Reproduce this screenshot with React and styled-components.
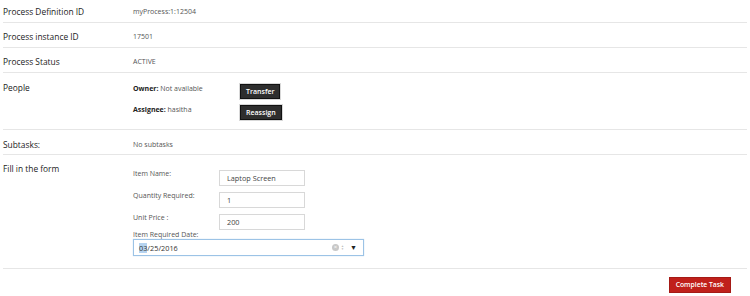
import React from "react";
import styled, { createGlobalStyle } from "styled-components";

const FONT = `"Open Sans", "Liberation Sans", sans-serif`;

const Global = createGlobalStyle`
  html, body { margin: 0; padding: 0; background: #fff; }
  body { font-family: ${FONT}; color: #333; }
  * { box-sizing: border-box; }
`;

const Page = styled.div`
  width: 750px;
  padding: 0 3px;
`;

const Row = styled.div`
  display: grid;
  grid-template-columns: 130px 1fr;
  border-bottom: 1px solid #e6e6e6;
  padding: ${(p) => p.$pad || "7px 0 3px"};
`;

const Label = styled.div`
  font-size: 8.4px;
  line-height: 14px;
  color: #222;
`;

const Value = styled.div`
  font-size: 7px;
  line-height: 14px;
  color: #555;
`;

const PeopleGrid = styled.div`
  display: grid;
  grid-template-columns: 107px auto;
  row-gap: 4px;
  justify-content: start;
  padding-top: 1px;
`;

const PersonText = styled.div`
  font-size: 7px;
  line-height: 14px;
  color: #555;
  b { color: #222; font-weight: 700; }
`;

const DarkButton = styled.button`
  font-family: ${FONT};
  font-size: 7px;
  font-weight: 600;
  color: #fff;
  background: #2e2e2e;
  border: 1px solid #111;
  outline: 1px solid #d8d8d8;
  height: 15px;
  padding: 0 5px;
  margin-top: 2px;
  line-height: 13px;
  cursor: pointer;
  justify-self: start;
`;

const FormGrid = styled.div`
  display: grid;
  grid-template-columns: 86px 86px;
  row-gap: 4px;
  padding-top: 6px;
`;

const FieldLabel = styled.div`
  font-size: 7px;
  line-height: ${(p) => (p.$tight ? "11px" : "12px")};
  color: #555;
`;

const TextInput = styled.input`
  font-family: ${FONT};
  font-size: 7.3px;
  color: #444;
  width: 86px;
  height: 16px;
  border: 1px solid #d8d8d8;
  padding: 0 7px;
  margin: 2px 0 0 0;
  background: #fff;
  outline: none;
`;

const DateBlock = styled.div`
  grid-column: 1 / span 2;
  margin-top: -5px;
`;

const DateField = styled.div`
  width: 231px;
  height: 17px;
  margin-top: -1px;
  border: 1px solid #9cc3e6;
  box-shadow: 0 0 1px #b7d4ee;
  display: flex;
  align-items: center;
  padding: 0 6px 0 5px;
  font-size: 7.3px;
  color: #333;
`;

const Selected = styled.span`
  background: #b5d3f0;
`;

const Spacer = styled.div`
  flex: 1;
`;

const ClearIcon = styled.span`
  width: 7px;
  height: 7px;
  border-radius: 50%;
  background: #c8c8c8;
  color: #fff;
  font-size: 6px;
  line-height: 7px;
  text-align: center;
  margin-right: 2px;
`;

const Spin = styled.span`
  display: flex;
  flex-direction: column;
  font-size: 3px;
  line-height: 3px;
  color: #bbb;
  margin-right: 6px;
`;

const Drop = styled.span`
  font-size: 7px;
  color: #222;
`;

const Footer = styled.div`
  display: flex;
  justify-content: flex-end;
  padding: 8px 16px 0 0;
`;

const RedButton = styled.button`
  font-family: ${FONT};
  font-size: 6.8px;
  font-weight: 600;
  color: #fff;
  background: #c0201b;
  border: 1px solid #a51a16;
  height: 16px;
  padding: 0 6px;
  line-height: 14px;
`;

export default function App() {
  return (
    <>
      <Global />
      <Page>
        <Row $pad="5px 0 3px">
          <Label>Process Definition ID</Label>
          <Value>myProcess:1:12504</Value>
        </Row>
        <Row>
          <Label>Process instance ID</Label>
          <Value>17501</Value>
        </Row>
        <Row>
          <Label>Process Status</Label>
          <Value>ACTIVE</Value>
        </Row>
        <Row $pad="8px 0 9px">
          <Label>People</Label>
          <PeopleGrid>
            <PersonText><b>Owner:</b> Not available</PersonText>
            <DarkButton>Transfer</DarkButton>
            <PersonText><b>Assignee:</b> hasitha</PersonText>
            <DarkButton>Reassign</DarkButton>
          </PeopleGrid>
        </Row>
        <Row $pad="8px 0 2px">
          <Label>Subtasks:</Label>
          <Value>No subtasks</Value>
        </Row>
        <Row $pad="7px 0 12px">
          <Label>Fill in the form</Label>
          <FormGrid>
            <FieldLabel>Item Name:</FieldLabel>
            <TextInput defaultValue="Laptop Screen" />
            <FieldLabel>Quantity Required:</FieldLabel>
            <TextInput defaultValue="1" />
            <FieldLabel>Unit Price :</FieldLabel>
            <TextInput defaultValue="200" />
            <DateBlock>
              <FieldLabel $tight>Item Required Date:</FieldLabel>
              <DateField>
                <Selected>03</Selected>/25/2016
                <Spacer />
                <ClearIcon>×</ClearIcon>
                <Spin><span>▲</span><span>▼</span></Spin>
                <Drop>▼</Drop>
              </DateField>
            </DateBlock>
          </FormGrid>
        </Row>
        <Footer>
          <RedButton>Complete Task</RedButton>
        </Footer>
      </Page>
    </>
  );
}
